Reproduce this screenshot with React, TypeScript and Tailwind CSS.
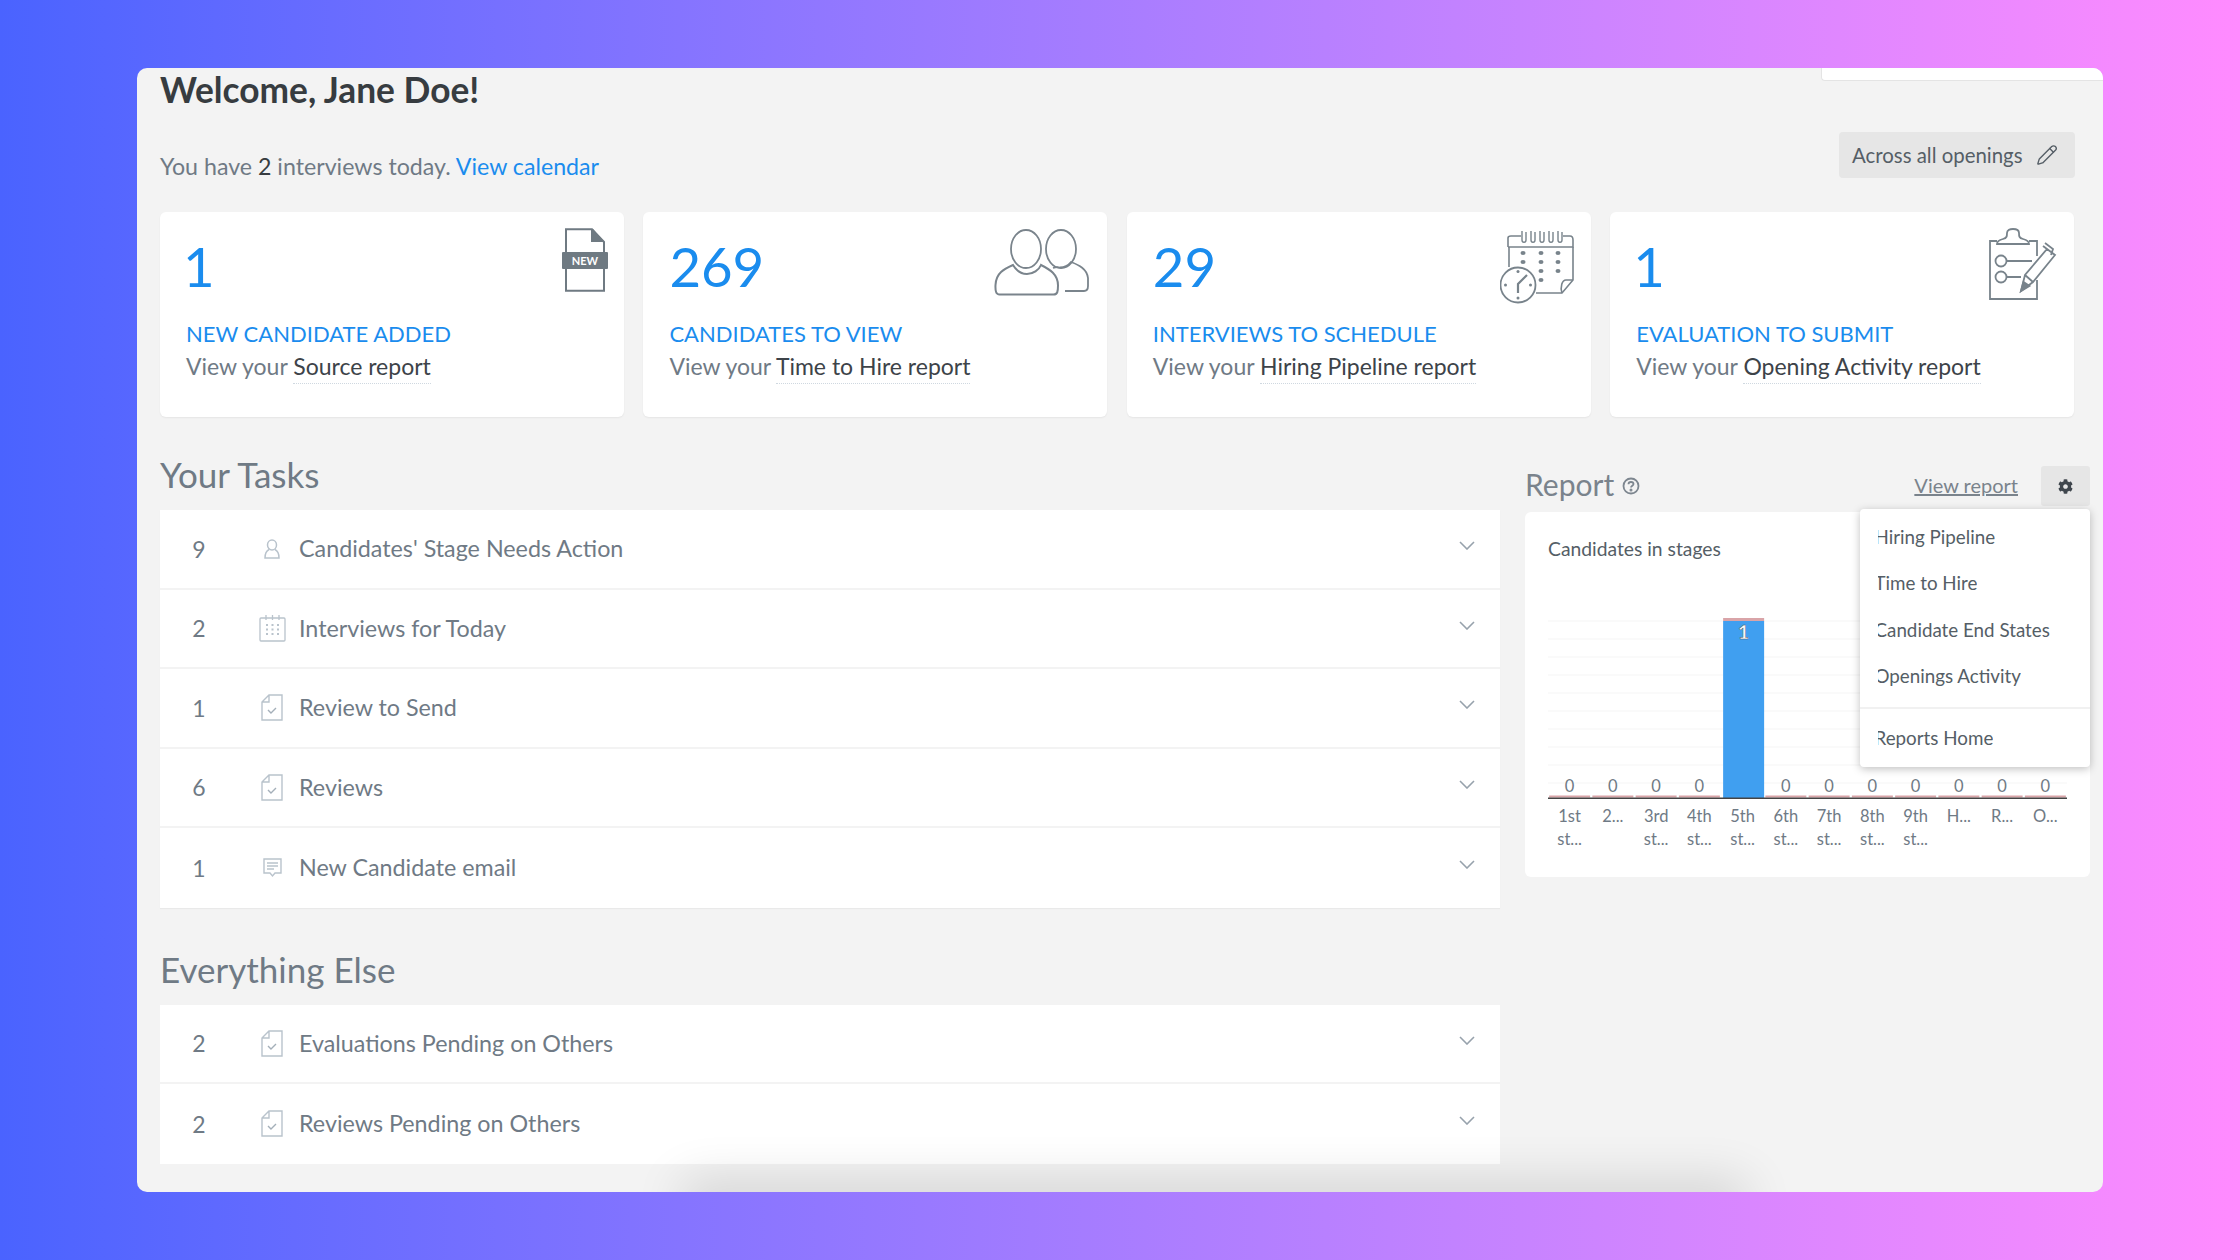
import React from "react";
import { FaCog } from "react-icons/fa";
import { Pencil } from "lucide-react";

const FileNewIcon = () => (
  <svg width="46" height="64" viewBox="0 0 46 64" className="absolute right-[16px] top-[16px]" fill="none">
    <path d="M4 24V1.2h26L42 14v10M42 41v21.8H4V41" stroke="#6f7a82" strokeWidth="2" />
    <path d="M29 1v13h13L31 1z" fill="#6f7a82" />
    <rect x="0" y="24" width="46" height="17" rx="1" fill="#6f7a82" />
    <text x="23" y="36.5" textAnchor="middle" fontSize="11" fontWeight="700" fill="#fff" fontFamily="Lato, sans-serif">NEW</text>
  </svg>
);

const UsersIcon = () => (
  <svg width="96" height="68" viewBox="0 0 96 68" className="absolute right-[17px] top-[17px]" fill="none" stroke="#7a848c" strokeWidth="1.8">
    <ellipse cx="32" cy="20" rx="15" ry="19" />
    <path d="M19 36C10 40 2 44 1.5 56c-.3 6 .5 9.5 4 9.5h54c4 0 4.500-3 4.500-9 0-11-8-16-17-20.500-2 5-8 9-14 9s-11-4-14-9z" strokeWidth="2" />
    <ellipse cx="67" cy="20" rx="15" ry="19" />
    <path d="M59 39c3-1 5-1 7-.5 6 0 9-3 11-5.500 8 3 16 7 17 16v8c0 3-1 5-4 5H71" />
  </svg>
);

const CalendarClockIcon = () => (
  <svg width="74" height="74" viewBox="0 0 74 74" className="absolute right-[17px] top-[18px]" fill="none" stroke="#78838b" strokeWidth="1.6">
    <path d="M8 17V8c0-1 1-2 3-2h10M63 6h7c2 0 3 2 3 4v7H8" />
    <path d="M9 17v20M73 17v33L62 63H36" />
    <path d="M62 63c-2-6 0-13 4-13h7" />
    <path d="M22 1v9c0 3 4 3 4 0V2M31 1v9c0 3 4 3 4 0V2M40 1v9c0 3 4 3 4 0V2M49 1v9c0 3 4 3 4 0V2M58 1v9c0 3 4 3 4 0V2" strokeWidth="1.4" />
    <g fill="#78838b" stroke="none">
      <ellipse cx="23" cy="23" rx="2.500" ry="2" />
      <ellipse cx="41" cy="23" rx="2.500" ry="2" />
      <ellipse cx="58" cy="23" rx="2.500" ry="2" />
      <ellipse cx="23" cy="32" rx="2.500" ry="2" />
      <ellipse cx="41" cy="32" rx="2.500" ry="2" />
      <ellipse cx="58" cy="32" rx="2.500" ry="2" />
      <ellipse cx="41" cy="41" rx="2.500" ry="2" />
      <ellipse cx="58" cy="41" rx="2.500" ry="2" />
      <ellipse cx="41" cy="50" rx="2.500" ry="2" />
    </g>
    <circle cx="18" cy="55" r="17.500" fill="#fff" strokeWidth="1.8" />
    <circle cx="18" cy="41.500" r="1.500" fill="#78838b" stroke="none" />
    <circle cx="18" cy="68" r="1.500" fill="#78838b" stroke="none" />
    <circle cx="5.500" cy="55" r="1.500" fill="#78838b" stroke="none" />
    <circle cx="30.500" cy="55" r="1.500" fill="#78838b" stroke="none" />
    <path d="M27 45 18 54v9" strokeWidth="2.200" />
  </svg>
);

const ClipboardIcon = () => (
  <svg width="68" height="72" viewBox="0 0 68 72" className="absolute right-[17px] top-[16px]" fill="none" stroke="#78838b" strokeWidth="1.8">
    <path d="M8 13H1v58h47V52M48 28V13h-8" />
    <path d="M8 16c0-3 2-4 6-5 4-1 4-3 4-6s3-4 6-4 6 1 6 4 0 5 4 6c4 1 6 2 6 5z" />
    <circle cx="12" cy="33" r="5.500" />
    <circle cx="12" cy="49" r="5.500" />
    <path d="M18 33h25M18 49h14" />
    <path d="M32 63 36 47 58 21l8 6-22 27zM36 47l8 7M54 18l8 6M56 15l8 6-2 6" />
    <path d="M32 63l2.500-9 6 4z" fill="#78838b" />
  </svg>
);

const PersonIcon = () => (
  <svg width="16" height="20" viewBox="0 0 16 20" fill="none" stroke="#b9c3cc" strokeWidth="1.500">
    <ellipse cx="8" cy="6" rx="4.500" ry="5" />
    <path d="M5 10.500C2 12 1 14 1 19h14c0-5-1-7-4-8.500" />
  </svg>
);

const CalendarIcon = () => (
  <svg width="27" height="27" viewBox="0 0 27 27" fill="none" stroke="#b9c3cc" strokeWidth="1.300">
    <rect x="1" y="3" width="25" height="23" rx="1" />
    <path d="M7 0v5M13.500 0v5M20 0v5" />
    <path d="M7 10h2M12.500 10h2M18 10h2M7 14.500h2M12.500 14.500h2M18 14.500h2M7 19h2M12.500 19h2M18 19h2" strokeWidth="2" />
  </svg>
);

const DocCheckIcon = () => (
  <svg width="22" height="27" viewBox="0 0 22 27" fill="none" stroke="#b9c3cc" strokeWidth="1.400">
    <path d="M1 8l7-7h13v25H1zM8 1v7H1" />
    <path d="M7 16l3 3 5-5" stroke="#a4afb9" />
  </svg>
);

const MessageIcon = () => (
  <svg width="19" height="20" viewBox="0 0 19 20" fill="none" stroke="#b9c3cc" strokeWidth="1.400">
    <path d="M1 1h17v14h-6l-2.500 3-2.500-3H1z" />
    <path d="M4 5h11M4 8h11M4 11h7" strokeWidth="1.300" />
  </svg>
);

const Chevron = () => (
  <svg width="16" height="9" viewBox="0 0 16 9" fill="none" stroke="#97a2ac" strokeWidth="1.600" className="mt-[-6px]">
    <path d="M1 1l7 7 7-7" />
  </svg>
);

const HelpIcon = () => (
  <svg width="18" height="18" viewBox="0 0 18 18" fill="none" stroke="#7d868f" strokeWidth="1.800">
    <circle cx="9" cy="9" r="7.500" />
    <path d="M6.500 7.200C6.500 5.700 7.600 5 9 5s2.500.8 2.500 2c0 1.600-2.500 1.800-2.500 3.500" />
    <circle cx="9" cy="13" r=".6" fill="#7d868f" />
  </svg>
);

type CardProps = { n: string; title: string; report: string; icon: React.ReactNode };

const Card = ({ n, title, report, icon }: CardProps) => (
  <div className="relative h-[205px] w-[464px] rounded-[6px] bg-white pl-[26px] shadow-[0_1px_2px_rgba(0,0,0,0.06)]">
    {icon}
    <div className={`pt-[23px] text-[54.500px] leading-[62px] font-normal text-[#1a8cee] ${n === "1" ? "ml-[-3px]" : ""}`}>{n}</div>
    <div className="mt-[22px] text-[22px] leading-[30px] text-[#1a8cee]">{title}</div>
    <div className="mt-[2px] text-[23px] leading-[30px] text-[#6f7a85]">
      View your{" "}
      <span className="border-b border-dotted border-[#cfd8e0] pb-[3px] text-[#3d4349]">{report}</span>
    </div>
  </div>
);

type RowProps = { n: string; label: string; icon: React.ReactNode };

const Row = ({ n, label, icon }: RowProps) => (
  <div className="flex h-[79.500px] items-center border-b-2 border-[#f3f3f3] bg-white last:border-b-0">
    <div className="w-[78px] text-center text-[23px] text-[#6f7a85]">{n}</div>
    <div className="flex w-[61px] justify-center pr-[12px] pl-[19px]">{icon}</div>
    <div className="flex-1 text-[23.300px] text-[#6f7a85]">{label}</div>
    <div className="pr-[25px]"><Chevron /></div>
  </div>
);

const MenuItem = ({ label }: { label: string }) => (
  <div className="flex h-[46.400px] items-center pl-[18px] text-[18.800px] text-[#555e66]">
    <span className="overflow-hidden"><span className="ml-[-3.500px] block">{label}</span></span>
  </div>
);

const labels: [string, string?][] = [
  ["1st", "st..."], ["2..."], ["3rd", "st..."], ["4th", "st..."], ["5th", "st..."], ["6th", "st..."],
  ["7th", "st..."], ["8th", "st..."], ["9th", "st..."], ["H..."], ["R..."], ["O..."],
];

const Chart = () => {
  const pitch = 43.25;
  return (
    <svg width="519" height="250" viewBox="0 0 519 250" className="block overflow-visible" style={{ fontFamily: "Lato, sans-serif" }}>
      {[0, 1, 2, 3, 4, 5, 6, 7, 8, 9].map((i) => (
        <line key={i} x1="0" x2="519" y1={1 + i * 18} y2={1 + i * 18} stroke="#f5f5f5" />
      ))}
      {labels.map((l, i) => {
        const cx = pitch * i + pitch / 2;
        return (
          <g key={i}>
            {i === 4 ? (
              <>
                <rect x={cx - 19.500} y="-2" width="41" height="3" fill="#d9a4a8" />
                <rect x={cx - 19.500} y="1" width="41" height="177" fill="#409ff0" />
                <text x={cx + 1} y="19" textAnchor="middle" fontSize="19" fontWeight="700" fill="#fff" stroke="#555" strokeWidth=".4">1</text>
              </>
            ) : (
              <>
                <rect x={cx - 20.500} y="175.500" width="41" height="2" fill="#d9a4a8" />
                <text x={cx} y="172" textAnchor="middle" fontSize="16.500" fill="#6f7a85">0</text>
              </>
            )}
            <text x={cx} y="202" textAnchor="middle" fontSize="16.500" fill="#6f7a85">{l[0]}</text>
            {l[1] && <text x={cx} y="225" textAnchor="middle" fontSize="16.500" fill="#6f7a85">{l[1]}</text>}
          </g>
        );
      })}
      <rect x="0" y="177.500" width="519" height="1.500" fill="#444" />
    </svg>
  );
};

export default function App() {
  return (
    <div className="h-[1260px] w-[2240px] bg-linear-to-r from-[#4a63ff] to-[#ff8bff] pt-[68px] pl-[137px] font-['Lato',sans-serif]">
      <div className="relative h-[1124px] w-[1966px] overflow-hidden rounded-[10px] bg-[#f3f3f3] pr-[13px] pl-[23px]">
        <div className="absolute top-0 right-0 h-[13px] w-[282px] rounded-bl-[4px] border-b border-l border-[#e4e4e4] bg-white" />

        <div className="pt-[3px] text-[35.300px] leading-[38px] font-bold text-[#373c40]">Welcome, Jane Doe!</div>

        <div className="mt-[23px] mr-[15px] flex h-[46px] items-center justify-between">
          <div className="mt-[23px] text-[23.200px] text-[#6f7a85]">
            You have <span className="text-[#373c40]">2</span> interviews today.{" "}
            <span className="text-[#1a8cee]">View calendar</span>
          </div>
          <div className="flex h-[46px] w-[236px] items-center gap-[13px] rounded-[4px] bg-[#e6e6e6] pl-[13px] text-[20.400px] text-[#555e66]">
            Across all openings <Pencil size={22} strokeWidth={1.500} />
          </div>
        </div>

        <div className="mt-[34px] mr-[15px] flex gap-[19.400px]">
          <Card n="1" title="NEW CANDIDATE ADDED" report="Source report" icon={<FileNewIcon />} />
          <Card n="269" title="CANDIDATES TO VIEW" report="Time to Hire report" icon={<UsersIcon />} />
          <Card n="29" title="INTERVIEWS TO SCHEDULE" report="Hiring Pipeline report" icon={<CalendarClockIcon />} />
          <Card n="1" title="EVALUATION TO SUBMIT" report="Opening Activity report" icon={<ClipboardIcon />} />
        </div>

        <div className="flex gap-[25px]">
          <div className="w-[1340px]">
            <div className="mt-[37px] text-[35px] leading-[40px] text-[#6f7a85]">Your Tasks</div>
            <div className="mt-[16px] shadow-[0_1px_1px_rgba(0,0,0,0.04)]">
              <Row n="9" label="Candidates' Stage Needs Action" icon={<PersonIcon />} />
              <Row n="2" label="Interviews for Today" icon={<CalendarIcon />} />
              <Row n="1" label="Review to Send" icon={<DocCheckIcon />} />
              <Row n="6" label="Reviews" icon={<DocCheckIcon />} />
              <Row n="1" label="New Candidate email" icon={<MessageIcon />} />
            </div>
            <div className="mt-[41px] text-[35px] leading-[40px] text-[#6f7a85]">Everything Else</div>
            <div className="mt-[16px]">
              <Row n="2" label="Evaluations Pending on Others" icon={<DocCheckIcon />} />
              <Row n="2" label="Reviews Pending on Others" icon={<DocCheckIcon />} />
            </div>
          </div>

          <div className="relative w-[565px]">
            <div className="mt-[49px] flex h-[40px] items-center">
              <span className="mt-[-3px] text-[30px] text-[#7a838c]">Report</span>
              <span className="ml-[8px]"><HelpIcon /></span>
              <span className="mt-[-2px] mr-[23px] ml-auto text-[20px] text-[#7a838c] underline">View report</span>
              <span className="flex h-[40px] w-[49px] items-center justify-center rounded-[3px] bg-[#e6e6e6] text-[#3f464d]">
                <FaCog size={15} />
              </span>
            </div>
            <div className="mt-[6px] h-[365px] rounded-[6px] bg-white pt-[25px] pl-[23px]">
              <div className="text-[19.300px] leading-[24px] text-[#555e66]">Candidates in stages</div>
              <div className="mt-[59px]"><Chart /></div>
            </div>
            <div className="absolute top-[92px] right-0 h-[258px] w-[230px] rounded-[4px] bg-white pt-[5px] shadow-[0_2px_8px_rgba(0,0,0,0.25)]">
              <MenuItem label="Hiring Pipeline" />
              <MenuItem label="Time to Hire" />
              <MenuItem label="Candidate End States" />
              <MenuItem label="Openings Activity" />
              <div className="mt-[7px] mb-[6px] h-[2px] bg-[#f1f1f1]" />
              <MenuItem label="Reports Home" />
            </div>
          </div>
        </div>

        <div className="absolute bottom-[-24px] left-[556px] h-[24px] w-[1043px] shadow-[0_0_50px_10px_rgba(0,0,0,0.14)]" />
      </div>
    </div>
  );
}
